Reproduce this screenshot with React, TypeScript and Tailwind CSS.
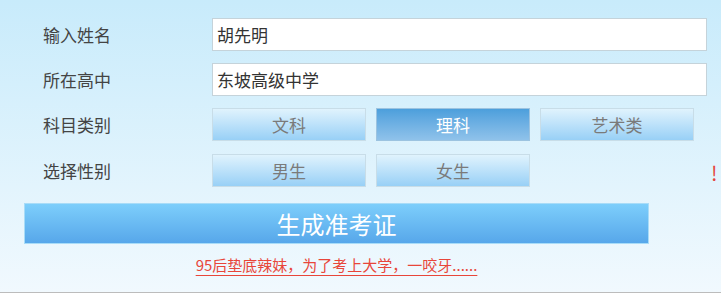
import { useState } from "react";

const font = { fontFamily: '"Noto Sans CJK SC", "Noto Sans", sans-serif' };

export default function App() {
  const [subject, setSubject] = useState("理科");
  const [gender, setGender] = useState<string | null>(null);

  const optBtn = (active: boolean) =>
    active
      ? "w-[154px] h-[33px] border border-[#9cc3e0] bg-gradient-to-b from-[#4c9fdc] to-[#8fc2ea] text-white text-[17px] leading-none"
      : "w-[154px] h-[33px] border border-[#c8dde8] bg-gradient-to-b from-[#e0f3fd] to-[#98d0f6] text-[#7a7a7a] text-[17px] leading-none";

  return (
    <div
      className="w-[721px] h-[293px] bg-gradient-to-b from-[#c8ebfb] to-[#f1f9fe] border-b border-[#bcbcbc] overflow-hidden"
      style={font}
    >
      <div className="pt-[18px] flex flex-col gap-[12px]">
        {/* Name */}
        <div className="flex items-center h-[33px]">
          <span className="w-[212px] pl-[43px] text-[17px] text-[#444]">输入姓名</span>
          <input
            defaultValue="胡先明"
            className="w-[495px] h-[33px] bg-white border border-[#c5d3da] px-[4px] text-[17px] text-[#333] outline-none"
            style={font}
          />
        </div>

        {/* School */}
        <div className="flex items-center h-[33px]">
          <span className="w-[212px] pl-[43px] text-[17px] text-[#444]">所在高中</span>
          <input
            defaultValue="东坡高级中学"
            className="w-[495px] h-[33px] bg-white border border-[#c5d3da] px-[4px] text-[17px] text-[#333] outline-none"
            style={font}
          />
        </div>

        {/* Subject */}
        <div className="flex items-center h-[33px]">
          <span className="w-[212px] pl-[43px] text-[17px] text-[#444]">科目类别</span>
          <div className="flex gap-[10px]">
            {["文科", "理科", "艺术类"].map((s) => (
              <button key={s} className={optBtn(subject === s)} style={font} onClick={() => setSubject(s)}>
                {s}
              </button>
            ))}
          </div>
        </div>

        {/* Gender */}
        <div className="flex items-center h-[33px] mt-[1px]">
          <span className="w-[212px] pl-[43px] text-[17px] text-[#444]">选择性别</span>
          <div className="flex gap-[10px]">
            {["男生", "女生"].map((g) => (
              <button key={g} className={optBtn(gender === g)} style={font} onClick={() => setGender(g)}>
                {g}
              </button>
            ))}
          </div>
          <span className="ml-[181px] mt-[4px] text-[20px] leading-none text-[#e6453c]">!</span>
        </div>
      </div>

      {/* Submit */}
      <div className="w-[625px] ml-[24px] mt-[16px]">
        <button
          className="w-full h-[41px] border border-[#a8dcf8] bg-gradient-to-b from-[#7dcefb] to-[#57a7ea] text-white text-[24px] leading-none"
          style={font}
        >
          生成准考证
        </button>
        <div className="text-center mt-[12px] leading-none">
          <a href="#" className="text-[15px] leading-none text-[#e8463a] underline underline-offset-[4px]">
            95后垫底辣妹，为了考上大学，一咬牙......
          </a>
        </div>
      </div>
    </div>
  );
}
